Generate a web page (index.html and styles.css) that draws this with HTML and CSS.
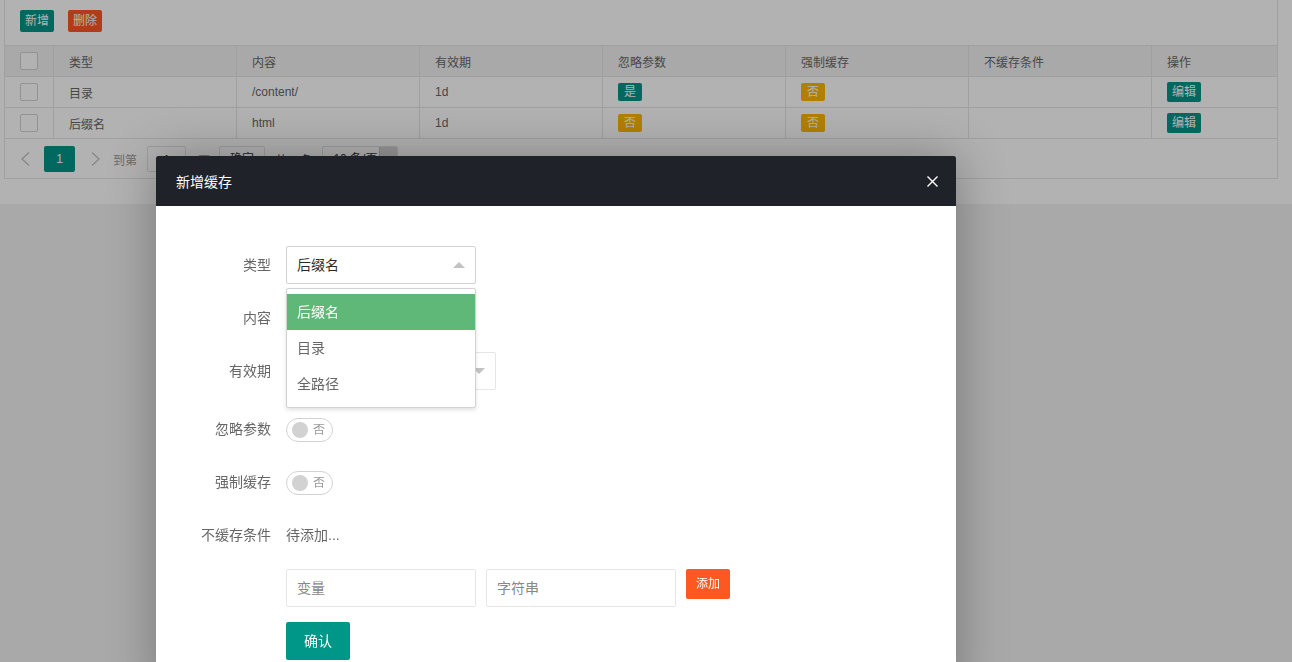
FILE: index.html
```html
<!DOCTYPE html>
<html lang="zh-CN">
<head>
<meta charset="utf-8">
<title>缓存设置</title>
<link rel="stylesheet" href="styles.css">
</head>
<body>
<div class="panel">
  <div class="card">
    <div class="toolbar">
      <button class="btn btn-xs">新增</button>
      <button class="btn btn-xs btn-danger">删除</button>
    </div>
    <div class="grid head">
      <div class="cell cell-check"><span class="checkbox"></span></div>
      <div class="cell">类型</div>
      <div class="cell">内容</div>
      <div class="cell">有效期</div>
      <div class="cell">忽略参数</div>
      <div class="cell">强制缓存</div>
      <div class="cell">不缓存条件</div>
      <div class="cell cell-last">操作</div>
    </div>
    <div class="grid">
      <div class="cell cell-check"><span class="checkbox"></span></div>
      <div class="cell">目录</div>
      <div class="cell">/content/</div>
      <div class="cell">1d</div>
      <div class="cell"><span class="badge badge-green">是</span></div>
      <div class="cell"><span class="badge badge-orange">否</span></div>
      <div class="cell"></div>
      <div class="cell cell-last"><button class="btn btn-edit">编辑</button></div>
    </div>
    <div class="grid">
      <div class="cell cell-check"><span class="checkbox"></span></div>
      <div class="cell">后缀名</div>
      <div class="cell">html</div>
      <div class="cell">1d</div>
      <div class="cell"><span class="badge badge-orange">否</span></div>
      <div class="cell"><span class="badge badge-orange">否</span></div>
      <div class="cell"></div>
      <div class="cell cell-last"><button class="btn btn-edit">编辑</button></div>
    </div>
    <div class="pager">
      <span class="pg-prev"><svg width="9" height="14" viewBox="0 0 9 14"><polyline points="8,0.5 1,7 8,13.5" fill="none" stroke="#c2c2c2" stroke-width="1.3"/></svg></span>
      <span class="pg-curr">1</span>
      <span class="pg-next"><svg width="9" height="14" viewBox="0 0 9 14"><polyline points="1,0.5 8,7 1,13.5" fill="none" stroke="#c2c2c2" stroke-width="1.3"/></svg></span>
      <span class="pg-text pg-to">到第</span>
      <span class="pg-input">1</span>
      <span class="pg-text pg-page">页</span>
      <span class="pg-btn">确定</span>
      <span class="pg-text pg-count">共 2 条</span>
      <span class="pg-limit">10 条/页<i class="pg-limit-arrow"></i></span>
    </div>
  </div>
</div>

<div class="shade"></div>

<div class="layer">
  <div class="layer-title">
    <span>新增缓存</span>
    <svg class="layer-close" width="11" height="11" viewBox="0 0 11 11"><path d="M0.5 0.5 L10.5 10.5 M10.5 0.5 L0.5 10.5" stroke="#ffffff" stroke-width="1.4" fill="none"/></svg>
  </div>
  <div class="layer-body">
    <div class="form-item">
      <label class="form-label">类型</label>
      <div class="select-wrap">
        <div class="select select-open">
          <span class="select-value">后缀名</span>
          <i class="edge edge-up"></i>
        </div>
        <dl class="dropdown">
          <dd class="option option-on">后缀名</dd>
          <dd class="option">目录</dd>
          <dd class="option">全路径</dd>
        </dl>
      </div>
    </div>
    <div class="form-item">
      <label class="form-label">内容</label>
      <div class="input"></div>
    </div>
    <div class="form-item form-item-wide">
      <label class="form-label">有效期</label>
      <div class="select select-long">
        <i class="edge edge-down"></i>
      </div>
    </div>
    <div class="form-item">
      <label class="form-label">忽略参数</label>
      <div class="switch"><i class="knob"></i><em>否</em></div>
    </div>
    <div class="form-item">
      <label class="form-label">强制缓存</label>
      <div class="switch"><i class="knob"></i><em>否</em></div>
    </div>
    <div class="form-item">
      <label class="form-label">不缓存条件</label>
      <div class="form-text">待添加...</div>
    </div>
    <div class="form-item form-block">
      <div class="input input-ph">变量</div>
      <div class="input input-ph">字符串</div>
      <button class="btn btn-sm btn-danger">添加</button>
    </div>
    <div class="form-item form-block">
      <button class="btn btn-main">确认</button>
    </div>
  </div>
</div>
</body>
</html>
```
FILE: styles.css
```css
html, body {
  margin: 0;
  padding: 0;
  height: 100%;
  overflow: hidden;
}
body {
  background: #f2f2f2;
  font-family: "Liberation Sans", "Noto Sans CJK SC", sans-serif;
  font-size: 14px;
  color: #666;
}
.panel {
  background: #fff;
  padding: 0 14px 25px 4px;
}
.card {
  border: 1px solid #e6e6e6;
  border-top: 0;
  background: #fff;
}
.toolbar {
  height: 46px;
  box-sizing: border-box;
  padding: 10px 15px 0;
  border-bottom: 1px solid #e6e6e6;
  display: flex;
  gap: 14px;
  align-items: flex-start;
}
.btn {
  border: 0;
  margin: 0;
  font-family: inherit;
  color: #fff;
  background: #009688;
  border-radius: 2px;
  cursor: pointer;
  white-space: nowrap;
}
.btn-xs {
  height: 22px;
  line-height: 22px;
  padding: 0 5px;
  font-size: 12px;
}
.btn-danger {
  background: #ff5722;
}
.btn-edit {
  height: 20px;
  line-height: 20px;
  padding: 0 5px;
  font-size: 12px;
}
.btn-sm {
  height: 30px;
  line-height: 30px;
  padding: 0 10px;
  font-size: 12px;
}
.btn-main {
  height: 38px;
  line-height: 38px;
  padding: 0 18px;
  font-size: 14px;
}
.grid {
  display: grid;
  grid-template-columns: 49px repeat(6, 183px) 1fr;
  height: 31px;
  box-sizing: border-box;
  border-bottom: 1px solid #e6e6e6;
  font-size: 12px;
  color: #666;
}
.grid.head {
  background: #f2f2f2;
}
.cell {
  display: flex;
  align-items: center;
  padding: 0 15px;
  border-right: 1px solid #e6e6e6;
  white-space: nowrap;
  overflow: hidden;
}
.cell-last {
  border-right: 0;
}
.cell-check {
  padding: 0;
  justify-content: center;
}
.checkbox {
  width: 18px;
  height: 18px;
  box-sizing: border-box;
  border: 1px solid #d2d2d2;
  border-radius: 2px;
  background: #fff;
}
.badge {
  display: inline-block;
  height: 18px;
  line-height: 18px;
  padding: 0 6px;
  font-size: 12px;
  border-radius: 2px;
  color: #fff;
}
.badge-green {
  background: #009688;
}
.badge-orange {
  background: #ffb800;
}
.pager {
  height: 39px;
  display: flex;
  align-items: center;
  padding: 1px 0 0 16px;
  box-sizing: border-box;
  font-size: 12px;
  color: #999;
}
.pg-prev, .pg-next {
  display: flex;
}
.pg-curr {
  margin-left: 14px;
  width: 31px;
  height: 26px;
  line-height: 26px;
  text-align: center;
  background: #009688;
  color: #fff;
  border-radius: 2px;
}
.pg-next {
  margin-left: 16px;
}
.pg-to {
  margin-left: 13px;
}
.pg-input {
  margin-left: 10px;
  width: 39px;
  height: 26px;
  line-height: 26px;
  box-sizing: border-box;
  border: 1px solid #e2e2e2;
  border-radius: 2px;
  text-align: center;
  color: #333;
}
.pg-page {
  margin-left: 12px;
}
.pg-btn {
  margin-left: 9px;
  width: 46px;
  height: 26px;
  line-height: 24px;
  box-sizing: border-box;
  border: 1px solid #e2e2e2;
  border-radius: 2px;
  text-align: center;
  color: #333;
}
.pg-count {
  margin-left: 10px;
  color: #333;
}
.pg-limit {
  margin-left: 10px;
  width: 76px;
  height: 26px;
  line-height: 24px;
  box-sizing: border-box;
  border: 1px solid #e2e2e2;
  border-radius: 2px;
  padding-left: 10px;
  color: #333;
  display: flex;
  justify-content: space-between;
}
.pg-limit-arrow {
  width: 17px;
  height: 24px;
  background: #d8d8d8;
  border-left: 1px solid #c2c2c2;
}

.shade {
  position: fixed;
  inset: 0;
  background: rgba(0, 0, 0, 0.3);
  z-index: 10;
}

.layer {
  position: absolute;
  left: 156px;
  top: 156px;
  width: 800px;
  height: 540px;
  background: #fff;
  border-radius: 2px;
  box-shadow: 1px 1px 50px rgba(0, 0, 0, 0.3);
  z-index: 20;
}
.layer-title {
  height: 50px;
  padding: 0 18px 0 20px;
  background: #20222a;
  color: #fff;
  font-size: 14px;
  display: flex;
  align-items: center;
  justify-content: space-between;
  border-radius: 2px 2px 0 0;
}
.layer-body {
  padding: 40px 20px 0;
}
.form-item {
  display: flex;
  align-items: flex-start;
  margin-bottom: 15px;
}
.form-item-wide {
  margin-bottom: 20px;
}
.form-block {
  padding-left: 110px;
  gap: 10px;
}
.form-label {
  width: 110px;
  box-sizing: border-box;
  padding: 9px 15px;
  line-height: 20px;
  text-align: right;
  color: #666;
  font-size: 14px;
}
.form-text {
  line-height: 20px;
  padding: 9px 0;
  color: #666;
}
.select-wrap {
  position: relative;
}
.select, .input {
  position: relative;
  width: 190px;
  height: 38px;
  box-sizing: border-box;
  border: 1px solid #e6e6e6;
  border-radius: 2px;
  padding: 0 10px;
  line-height: 36px;
  background: #fff;
  color: rgba(0, 0, 0, 0.85);
}
.select-open {
  border-color: #d2d2d2;
}
.select-long {
  width: 210px;
}
.input-ph {
  color: #888;
}
.edge {
  position: absolute;
  right: 10px;
  top: 50%;
  width: 0;
  height: 0;
  border: 6px solid transparent;
}
.edge-up {
  border-bottom-color: #c2c2c2;
  margin-top: -9px;
}
.edge-down {
  border-top-color: #c2c2c2;
  margin-top: -3px;
}
.dropdown {
  position: absolute;
  left: 0;
  top: 42px;
  width: 100%;
  box-sizing: border-box;
  margin: 0;
  padding: 5px 0;
  border: 1px solid #d2d2d2;
  border-radius: 2px;
  background: #fff;
  box-shadow: 0 2px 4px rgba(0, 0, 0, 0.12);
  z-index: 5;
}
.option {
  margin: 0;
  padding: 0 10px;
  line-height: 36px;
  font-size: 14px;
  color: #666;
}
.option-on {
  background: #5fb878;
  color: #fff;
}
.switch {
  margin-top: 8px;
  width: 47px;
  height: 24px;
  line-height: 22px;
  box-sizing: border-box;
  border: 1px solid #d2d2d2;
  border-radius: 20px;
  padding: 0 0 0 5px;
  background: #fff;
  display: flex;
  align-items: center;
}
.knob {
  width: 16px;
  height: 16px;
  border-radius: 50%;
  background: #d2d2d2;
}
.switch em {
  font-style: normal;
  font-size: 12px;
  color: #999;
  margin-left: 5px;
}
```
